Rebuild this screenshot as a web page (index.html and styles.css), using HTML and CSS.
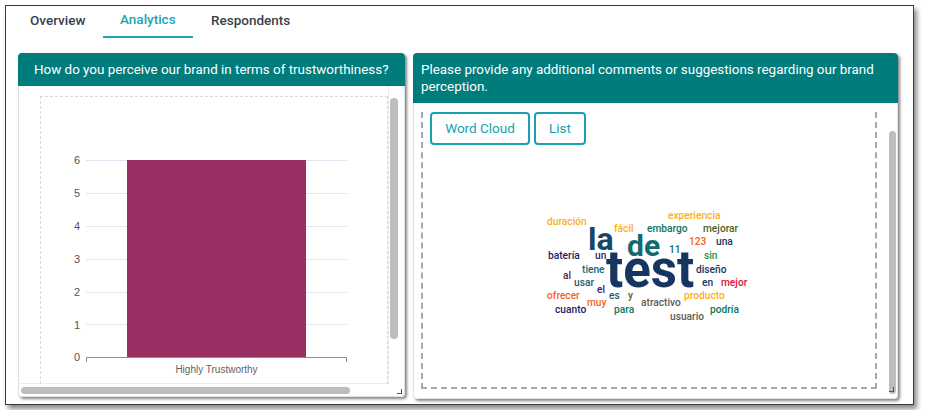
FILE: index.html
```html
<!DOCTYPE html>
<html lang="en">
  <head>
    <meta charset="UTF-8" />
    <title>Survey Analytics</title>
    <link rel="stylesheet" href="styles.css">
  </head>
  <body>
    <div class="frame">
      <div class="tabs">
        <div class="tab">Overview</div>
        <div class="tab active">Analytics</div>
        <div class="tab">Respondents</div>
      </div>
      <div class="cards">
        <!-- Bar chart card -->
        <div class="card card-left">
          <div class="card-header">How do you perceive our brand in terms of trustworthiness?</div>
          <div class="card-body">
            <div class="chart-view">
              <div class="chart-box">
                <svg class="chart" width="347" height="287" viewBox="41 97 347 287">
                  <g class="grid">
                    <line x1="86" x2="347" y1="160.5" y2="160.5" />
                    <line x1="86" x2="347" y1="193.5" y2="193.5" />
                    <line x1="86" x2="347" y1="226.5" y2="226.5" />
                    <line x1="86" x2="347" y1="259.5" y2="259.5" />
                    <line x1="86" x2="347" y1="292.5" y2="292.5" />
                    <line x1="86" x2="347" y1="324.5" y2="324.5" />
                  </g>
                  <rect class="bar" x="127" y="160" width="179" height="198" />
                  <path class="axis" d="M86.5 362V357.5H346.5V362" />
                  <g class="y-labels">
                    <text x="80" y="164">6</text>
                    <text x="80" y="197">5</text>
                    <text x="80" y="230">4</text>
                    <text x="80" y="263">3</text>
                    <text x="80" y="296">2</text>
                    <text x="80" y="329">1</text>
                    <text x="80" y="361">0</text>
                  </g>
                  <text class="x-label" x="216.5" y="373">Highly Trustworthy</text>
                </svg>
              </div>
            </div>
            <div class="scroll-y"><div class="thumb"></div></div>
            <div class="scroll-x"><div class="thumb"></div></div>
            <div class="resize"></div>
          </div>
        </div>

        <!-- Word cloud card -->
        <div class="card card-right">
          <div class="card-header">Please provide any additional comments or suggestions regarding our brand perception.</div>
          <div class="card-body">
            <div class="cloud-view">
              <div class="cloud-box">
                <div class="buttons">
                  <button class="btn btn-wide">Word Cloud</button>
                  <button class="btn">List</button>
                </div>
                <svg class="cloud" width="215" height="120" viewBox="540 205 215 120">
                  <text class="w-yellow" x="668" y="219">experiencia</text>
                  <text class="w-yellow" x="547" y="225">duración</text>
                  <text class="w-yellow" x="614" y="232">fácil</text>
                  <text class="w-teal" x="647" y="232">embargo</text>
                  <text class="w-olive" x="703" y="232">mejorar</text>
                  <text class="w-big w-blue size-la" x="588" y="250">la</text>
                  <text class="w-big w-petrol size-de" x="627" y="256">de</text>
                  <text class="w-big w-navy size-test" x="606" y="287">test</text>
                  <text class="w-orange" x="689" y="245">123</text>
                  <text class="w-navy" x="716" y="245">una</text>
                  <text class="w-petrol" x="669" y="253">11</text>
                  <text class="w-green" x="704" y="259">sin</text>
                  <text class="w-indigo" x="548" y="259">batería</text>
                  <text class="w-purple" x="595" y="259">un</text>
                  <text class="w-petrol" x="582" y="273">tiene</text>
                  <text class="w-navy" x="696" y="273">diseño</text>
                  <text class="w-maroon" x="563" y="279">al</text>
                  <text class="w-slate" x="574" y="286">usar</text>
                  <text class="w-navy" x="702" y="286">en</text>
                  <text class="w-red" x="721" y="286">mejor</text>
                  <text class="w-purple" x="597" y="293">el</text>
                  <text class="w-orange" x="547" y="299">ofrecer</text>
                  <text class="w-slate" x="609" y="299">es</text>
                  <text class="w-olive" x="628" y="299">y</text>
                  <text class="w-yellow" x="684" y="299">producto</text>
                  <text class="w-orange" x="587" y="306">muy</text>
                  <text class="w-gray" x="641" y="306">atractivo</text>
                  <text class="w-indigo" x="555" y="313">cuanto</text>
                  <text class="w-teal" x="614" y="313">para</text>
                  <text class="w-teal" x="710" y="313">podría</text>
                  <text class="w-gray" x="670" y="320">usuario</text>
                </svg>
              </div>
            </div>
            <div class="scroll-y"><div class="thumb"></div></div>
            <div class="resize"></div>
          </div>
        </div>
      </div>
    </div>
  </body>
</html>
```

FILE: styles.css
```css
body {
  margin: 0;
  padding: 5px;
  background: #fff;
  font-family: Roboto, "Liberation Sans", sans-serif;
}
.frame {
  box-sizing: border-box;
  width: 909px;
  height: 400px;
  padding: 0 15px 0 12px;
  border: 1px solid #3c3c3c;
  box-shadow: 3px 4px 5px #8a8a8a;
  background: #fff;
}
.tabs {
  display: flex;
  height: 32px;
}
.tab {
  box-sizing: border-box;
  height: 32px;
  padding: 6px 18px 0;
  font-size: 13.5px;
  font-weight: 500;
  line-height: 16px;
  color: #37424a;
}
.tab:first-child {
  width: 85px;
  padding-left: 12px;
  padding-right: 0;
}
.tab.active {
  width: 90px;
  padding: 5px 0 0 17px;
  color: #1ba5b6;
  border-bottom: 2px solid #1ba5b6;
}
.cards {
  display: flex;
  align-items: flex-start;
  gap: 8px;
  margin-top: 15px;
}
.card {
  box-sizing: border-box;
  display: flex;
  flex-direction: column;
  border-radius: 4px;
  background: #fff;
  box-shadow: 2px 2px 3px #858585;
}
.card-left {
  width: 387px;
  height: 344px;
}
.card-right {
  width: 485px;
  height: 346px;
}
.card-header {
  padding: 8px 8px 8px 16px;
  border-radius: 4px 4px 0 0;
  background: #007c7c;
  color: #fff;
  font-size: 13.4px;
  line-height: 17px;
}
.card-right .card-header {
  padding-left: 8px;
}
.card-body {
  position: relative;
  flex: 1;
  border: 1px solid #e2e2e2;
  border-top: none;
  border-radius: 0 0 4px 4px;
}
.chart-view {
  box-sizing: border-box;
  width: 370px;
  height: 298px;
  padding: 10px 0 0 21px;
  border-right: 1px solid #ececec;
  border-bottom: 1px solid #ececec;
}
.chart-box {
  height: 287px;
  border: 1px dashed #d9d9d9;
  border-bottom: none;
  overflow: hidden;
}
.chart {
  display: block;
}
.grid line {
  stroke: #e3e6f2;
  stroke-width: 1;
}
.bar {
  fill: #992e62;
}
.axis {
  fill: none;
  stroke: #8c8c94;
  stroke-width: 1;
}
.y-labels text {
  font-family: "Liberation Sans", sans-serif;
  font-size: 11px;
  fill: #555;
  text-anchor: end;
}
.x-label {
  font-family: "Liberation Sans", sans-serif;
  font-size: 10px;
  fill: #5f5f6b;
  text-anchor: middle;
}
.scroll-y {
  position: absolute;
  top: 12px;
  right: 6px;
  width: 8px;
}
.scroll-y .thumb {
  height: 241px;
  border-radius: 4px;
  background: #bdbdbd;
}
.card-right .scroll-y {
  top: 28px;
  right: 1px;
  width: 7px;
  height: 263px;
}
.card-right .scroll-y .thumb {
  height: 263px;
}
.scroll-x {
  position: absolute;
  left: 2px;
  bottom: 2px;
  width: 329px;
  height: 7px;
}
.scroll-x .thumb {
  height: 7px;
  border-radius: 4px;
  background: #bdbdbd;
}
.resize {
  position: absolute;
  right: 2px;
  bottom: 2px;
  width: 4px;
  height: 4px;
  border-right: 1px solid #555;
  border-bottom: 1px solid #555;
}
.card-right .resize {
  right: 3px;
  bottom: 6px;
}
.cloud-view {
  padding: 9px 0 0 7px;
}
.cloud-box {
  box-sizing: border-box;
  width: 456px;
  height: 277px;
  border: 2px dashed #a5a8b9;
  border-top: none;
}
.buttons {
  display: flex;
  gap: 4px;
  padding-left: 7px;
}
.btn {
  box-sizing: border-box;
  width: 52px;
  height: 33px;
  padding: 0 0 2px;
  border: 2px solid #1ba0b1;
  border-radius: 4px;
  background: #fff;
  color: #1ba0b1;
  font-family: Roboto, sans-serif;
  font-size: 13.5px;
}
.btn-wide {
  width: 100px;
}
.cloud {
  display: block;
  margin: 60px 0 0 117px;
}
.cloud text {
  font-family: Roboto, sans-serif;
  font-size: 10.2px;
  font-weight: 500;
}
.cloud .w-big {
  font-weight: 700;
}
.cloud .size-la { font-size: 32px; }
.cloud .size-de { font-size: 30px; }
.cloud .size-test { font-size: 51px; }
.w-yellow { fill: #fbb117; }
.w-teal { fill: #0c7561; }
.w-olive { fill: #4f5f2c; }
.w-blue { fill: #15476b; }
.w-petrol { fill: #106a70; }
.w-navy { fill: #17365f; }
.w-orange { fill: #f4631e; }
.w-green { fill: #2f8b45; }
.w-indigo { fill: #1f1a66; }
.w-purple { fill: #42186d; }
.w-maroon { fill: #63164f; }
.w-slate { fill: #2a5a70; }
.w-red { fill: #d9113c; }
.w-gray { fill: #5c5c5c; }
```
